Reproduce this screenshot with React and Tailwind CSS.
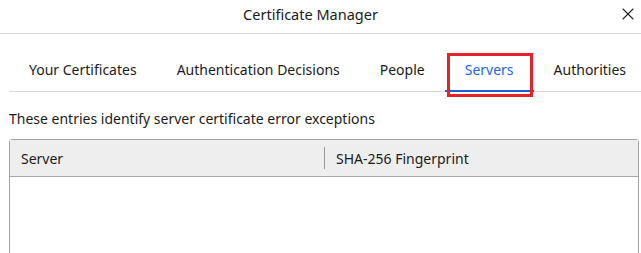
import { X } from 'lucide-react';

const tabs = ['Your Certificates', 'Authentication Decisions', 'People', 'Servers', 'Authorities'];

const App = () => {
  const active = 'Servers';

  return (
    <div className="relative h-[253px] w-[641px] overflow-hidden bg-white text-[#1b1b1b]" style={{ fontFamily: '"Noto Sans", "Open Sans", sans-serif' }}>
      <div className="relative flex h-[34px] items-center justify-center border-b border-[#dadada] pb-[4px] pr-[20px]">
        <span className="text-[14.5px]">Certificate Manager</span>
        <button className="absolute right-[3px] top-[4px] text-[#222]">
          <X size={20} strokeWidth={1.3} />
        </button>
      </div>

      <div className="ml-[9px] flex h-[58px] items-end border-b border-[#d8d8d8]">
        {tabs.map((tab) => (
          <div
            key={tab}
            className={`-mb-px flex h-[42px] shrink-0 items-center whitespace-nowrap border-b-2 px-5 pb-[1px] text-[14px] ${
              tab === active ? 'border-[#1a5fd6] text-[#2563eb]' : 'border-transparent'
            }`}
          >
            {tab}
          </div>
        ))}
      </div>

      <div className="absolute left-[447px] top-[53px] h-[44px] w-[86px] border-[3px] border-[#e8202a]" />

      <p className="ml-[9px] mt-[16px] text-[14px]">These entries identify server certificate error exceptions</p>

      <div className="ml-[9px] mr-[2px] mt-[10px] h-[120px] rounded-t-[3px] border border-[#a3a3a3]">
        <div className="flex h-[37px] items-center border-b border-[#a9a9a9] bg-[#eeeeee] text-[14px]">
          <div className="flex h-[22px] w-[315px] items-center border-r border-[#9a9a9a] pl-[11px]">Server</div>
          <div className="pl-[11px]">SHA-256 Fingerprint</div>
        </div>
      </div>
    </div>
  );
};

export default App;
